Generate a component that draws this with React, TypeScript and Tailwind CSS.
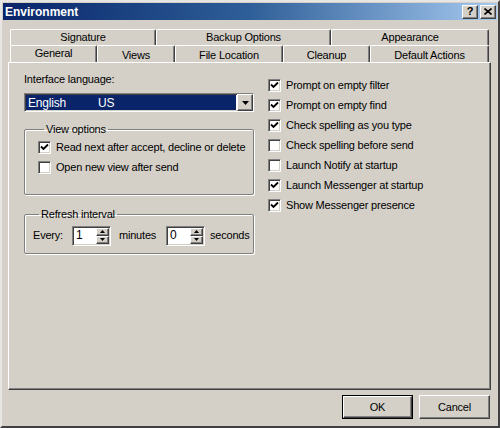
import React from 'react';

const raised =
  'border border-t-white border-l-white border-r-[#404040] border-b-[#404040] shadow-[inset_-1px_-1px_0_#808080]';
const sunken =
  'border border-t-[#808080] border-l-[#808080] border-r-white border-b-white shadow-[inset_1px_1px_0_#404040,inset_-1px_-1px_0_#d4d0c8]';

function Check({ checked, label }: { checked: boolean; label: string }) {
  return (
    <div className="flex items-center gap-[5px] h-[20px] whitespace-nowrap">
      <div className={`w-[13px] h-[13px] shrink-0 bg-white flex items-center justify-center ${sunken}`}>
        {checked && (
          <svg width="9" height="9" viewBox="0 0 9 9">
            <path d="M1 3.5 L3.5 6 L8 1.5" stroke="#000" strokeWidth="1.8" fill="none" />
          </svg>
        )}
      </div>
      <span>{label}</span>
    </div>
  );
}

function Spinner({ value }: { value: string }) {
  return (
    <div className={`w-[39px] h-[20px] bg-white flex items-stretch ${sunken}`}>
      <span className="flex-1 pl-[3px] leading-[17px] text-[12px]">{value}</span>
      <div className="w-[15px] flex flex-col p-[1px]">
        <div className={`flex-1 bg-[#d4d0c8] flex items-center justify-center ${raised}`}>
          <svg width="5" height="3" viewBox="0 0 5 3"><path d="M2.5 0 L5 3 L0 3 Z" fill="#000" /></svg>
        </div>
        <div className={`flex-1 bg-[#d4d0c8] flex items-center justify-center ${raised}`}>
          <svg width="5" height="3" viewBox="0 0 5 3"><path d="M0 0 L5 0 L2.5 3 Z" fill="#000" /></svg>
        </div>
      </div>
    </div>
  );
}

function Tab({ label, width, className = '' }: { label: string; width: string; className?: string }) {
  return (
    <div
      className={`${width} flex items-center justify-center border-t border-l border-t-white border-l-white border-r border-r-[#404040] rounded-t-[2px] shadow-[inset_-1px_0_0_#808080] ${className}`}
    >
      {label}
    </div>
  );
}

function Group({ title, className = '', children }: { title: string; className?: string; children: React.ReactNode }) {
  return (
    <fieldset
      className={`border border-[#808080] shadow-[inset_1px_1px_0_#fff,1px_1px_0_#fff] rounded-[2px] pr-[2px] ${className}`}
    >
      <legend className="ml-[6px] px-[2px]">{title}</legend>
      {children}
    </fieldset>
  );
}

export default function App() {
  return (
    <div className="w-[500px] h-[428px] bg-[#d4d0c8] flex flex-col border-2 border-t-[#e8e6e2] border-l-[#e8e6e2] border-r-[#404040] border-b-[#404040] font-['Liberation_Sans',Arial,sans-serif] text-[11px] text-black tracking-[-0.2px] overflow-hidden">
      {/* Title bar */}
      <div className="mx-[1px] mt-[1px] h-[17px] flex items-center justify-between bg-gradient-to-r from-[#0a246a] via-[#2f5f98] to-[#a6caf0] pl-[2px] pr-[1px]">
        <span className="text-white font-bold text-[12px] tracking-normal">Environment</span>
        <div className="flex gap-[2px]">
          <div className={`w-[16px] h-[14px] bg-[#d4d0c8] flex items-center justify-center font-bold text-[11px] leading-none ${raised}`}>?</div>
          <div className={`w-[16px] h-[14px] bg-[#d4d0c8] flex items-center justify-center ${raised}`}>
            <svg width="8" height="7" viewBox="0 0 8 7">
              <path d="M0.5 0.5 L7.5 6.5 M7.5 0.5 L0.5 6.5" stroke="#000" strokeWidth="1.6" />
            </svg>
          </div>
        </div>
      </div>

      {/* Tabs */}
      <div className="mt-[9px] ml-[8px] flex flex-col">
        <div className="flex h-[16px]">
          <Tab label="Signature" width="w-[146px]" />
          <Tab label="Backup Options" width="w-[175px]" />
          <Tab label="Appearance" width="w-[158px]" />
        </div>
        <div className="flex h-[17px]">
          <Tab label="General" width="w-[87px]" className="pb-[2px]" />
          <Tab label="Views" width="w-[78px]" className="pt-[3px]" />
          <Tab label="File Location" width="w-[108px]" className="pt-[3px]" />
          <Tab label="Cleanup" width="w-[87px]" className="pt-[3px]" />
          <Tab label="Default Actions" width="w-[119px]" className="pt-[3px]" />
        </div>
      </div>

      {/* Panel */}
      <div className="ml-[6px] w-[483px] h-[328px] border border-t-white border-l-white border-r-[#404040] border-b-[#404040] shadow-[inset_-1px_-1px_0_#808080] flex gap-[14px] pt-[9px] pl-[15px]">
        <div className="w-[230px] flex flex-col">
          <span className="leading-[14px]">Interface language:</span>
          <div className={`mt-[7px] h-[19px] bg-white flex items-stretch ${sunken}`}>
            <div className="flex-1 m-[1px] bg-[#0a246a] text-white flex items-center pl-[2px] text-[12px]">
              <span className="w-[70px]">English</span>
              <span>US</span>
            </div>
            <div className={`w-[16px] bg-[#d4d0c8] flex items-center justify-center ${raised}`}>
              <svg width="7" height="4" viewBox="0 0 7 4"><path d="M0 0 L7 0 L3.5 4 Z" fill="#000" /></svg>
            </div>
          </div>

          <Group title="View options" className="mt-[9px] h-[74px] pl-[13px]">
            <Check checked label="Read next after accept, decline or delete" />
            <Check checked={false} label="Open new view after send" />
          </Group>

          <Group title="Refresh interval" className="mt-[11px] h-[48px] pl-[8px]">
            <div className="flex items-center mt-[3px]">
              <span className="w-[39px]">Every:</span>
              <Spinner value="1" />
              <span className="ml-[8px] w-[47px]">minutes</span>
              <Spinner value="0" />
              <span className="ml-[5px]">seconds</span>
            </div>
          </Group>
        </div>

        <div className="flex flex-col pt-[3px]">
          <Check checked label="Prompt on empty filter" />
          <Check checked label="Prompt on empty find" />
          <Check checked label="Check spelling as you type" />
          <Check checked={false} label="Check spelling before send" />
          <Check checked={false} label="Launch Notify at startup" />
          <Check checked label="Launch Messenger at startup" />
          <Check checked label="Show Messenger presence" />
        </div>
      </div>

      {/* Buttons */}
      <div className="mt-[5px] mr-[8px] flex justify-end gap-[6px]">
        <button className="w-[71px] h-[24px] bg-[#d4d0c8] border border-black flex">
          <div className={`flex-1 flex items-center justify-center ${raised}`}>OK</div>
        </button>
        <button className={`w-[71px] h-[24px] bg-[#d4d0c8] flex items-center justify-center ${raised}`}>Cancel</button>
      </div>
    </div>
  );
}
